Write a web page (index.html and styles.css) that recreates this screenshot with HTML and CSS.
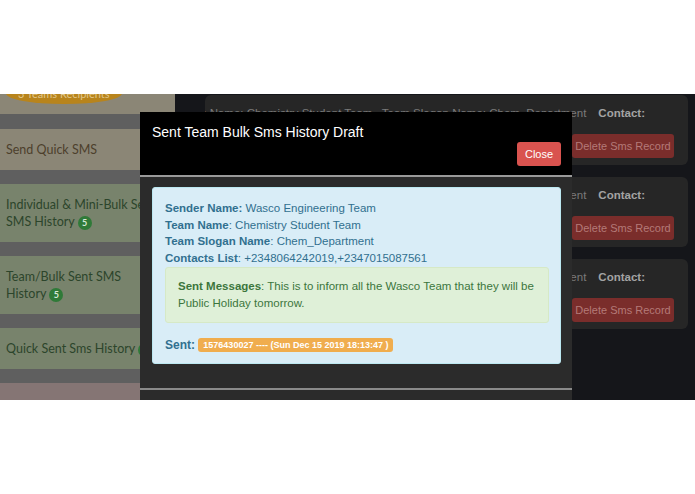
FILE: index.html
```html
<!DOCTYPE html>
<html lang="en">
<head>
    <meta charset="UTF-8">
    <meta name="viewport" content="width=device-width, initial-scale=1.0">
    <title>Sent Team Bulk Sms History</title>
    <link rel="stylesheet" href="styles.css">
</head>
<body>
    <div class="top-space"></div>
    <div class="app">
        <div class="sidebar">
            <div class="side-item beige first">
                <span class="pill">3 Teams Recipients</span>
            </div>
            <div class="side-item beige">Send Quick SMS</div>
            <div class="side-item green">Individual &amp; Mini-Bulk Sent<br>SMS History <span class="count">5</span></div>
            <div class="side-item green">Team/Bulk Sent SMS<br>History <span class="count">5</span></div>
            <div class="side-item green">Quick Sent Sms History <span class="count">3</span></div>
            <div class="side-item pink last">Update Sender Id <span class="count red">1</span></div>
        </div>

        <div class="main">
            <div class="card">
                <div class="card-row"><span>Team Name: Chemistry Student Team &nbsp; Team Slogan Name: Chem_Department</span><b>Contact:</b></div>
                <div class="card-actions"><button class="btn-delete">Delete Sms Record</button></div>
            </div>
            <div class="card">
                <div class="card-row"><span>Team Name: Chemistry Student Team &nbsp; Team Slogan Name: Chem_Department</span><b>Contact:</b></div>
                <div class="card-actions"><button class="btn-delete">Delete Sms Record</button></div>
            </div>
            <div class="card">
                <div class="card-row"><span>Team Name: Chemistry Student Team &nbsp; Team Slogan Name: Chem_Department</span><b>Contact:</b></div>
                <div class="card-actions"><button class="btn-delete">Delete Sms Record</button></div>
            </div>
        </div>

        <!-- modal -->
        <div class="modal">
            <div class="modal-header">
                <h4 class="modal-title">Sent Team Bulk Sms History Draft</h4>
                <button class="btn-close">Close</button>
            </div>
            <div class="modal-body">
                <div class="alert-info">
                    <div><b>Sender Name:</b> Wasco Engineering Team</div>
                    <div><b>Team Name</b>: Chemistry Student Team</div>
                    <div><b>Team Slogan Name</b>: Chem_Department</div>
                    <div><b>Contacts List</b>: +2348064242019,+2347015087561</div>
                    <div class="alert-success">
                        <b>Sent Messages</b>: This is to inform all the Wasco Team that they will be Public Holiday tomorrow.
                    </div>
                    <div class="sent-line"><b>Sent:</b> <span class="label-warning">1576430027 ---- (Sun Dec 15 2019 18:13:47 )</span></div>
                </div>
            </div>
            <div class="modal-footer"></div>
        </div>
    </div>
</body>
</html>
```

FILE: styles.css
```css
body {
    margin: 0;
    background-color: #fff;
    font-family: "Liberation Sans", Arial, sans-serif;
}

.top-space {
    height: 94px;
}

.app {
    position: relative;
    display: flex;
    height: 306px;
    overflow: hidden;
    background-color: #15161a;
}

.sidebar {
    width: 175px;
    flex-shrink: 0;
    background-color: #5f5f5f;
    font-family: Lato, "DejaVu Sans", sans-serif;
    font-size: 12.5px;
    line-height: 17px;
}

.side-item {
    padding: 12px 6px;
    margin-bottom: 14px;
    white-space: nowrap;
}

.side-item.first {
    margin-top: -17px;
    padding: 6px 6px 10px;
    margin-bottom: 15px;
}

.side-item.last {
    padding-top: 15px;
}

.beige {
    background-color: #8b8676;
    color: #4d402c;
}

.green {
    background-color: #78836c;
    color: #2c452b;
}

.pink {
    background-color: #857574;
    color: #3f2d2c;
}

.pill {
    display: inline-block;
    background-color: #b8841c;
    color: #e0c68a;
    border-radius: 50%;
    padding: 2px 12px;
    font-size: 11px;
}

.count {
    display: inline-block;
    width: 14px;
    height: 14px;
    line-height: 14px;
    border-radius: 50%;
    background-color: #2f7a38;
    color: #d8e8d8;
    font-size: 9px;
    font-weight: bold;
    text-align: center;
    vertical-align: middle;
}

.count.red {
    background-color: #8b1d1d;
}

.main {
    flex: 1;
    min-width: 0;
    padding: 1px 7px 0 30px;
}

.card {
    background-color: #262626;
    border-radius: 6px;
    height: 70px;
    margin-bottom: 12px;
    box-sizing: border-box;
    padding-top: 12px;
    overflow: hidden;
}

.card-row {
    display: flex;
    justify-content: flex-end;
    gap: 12px;
    font-size: 11.5px;
    color: #7a7a7a;
    padding-right: 43px;
    white-space: nowrap;
}

.card-row b {
    color: #a3a3a3;
}

.card-actions {
    display: flex;
    justify-content: flex-end;
    padding-right: 14px;
    margin-top: 15px;
}

.btn-delete {
    background-color: #7a2d2b;
    color: #b47a78;
    border: none;
    border-radius: 3px;
    font-family: "Liberation Sans", Arial, sans-serif;
    font-size: 11px;
    height: 24px;
    width: 102px;
    padding: 0;
}

.modal {
    position: absolute;
    left: 140px;
    top: 18px;
    width: 432px;
    background-color: #2b2b2b;
}

.modal-header {
    background-color: #000;
    height: 65px;
    box-sizing: border-box;
    padding: 12px 11px 0 12px;
    border-bottom: 2px solid #9a9a9a;
    position: relative;
}

.modal-title {
    margin: 0;
    color: #fff;
    font-size: 14px;
    font-weight: normal;
}

.btn-close {
    position: absolute;
    right: 11px;
    top: 30px;
    width: 44px;
    height: 24px;
    border: none;
    border-radius: 3px;
    background-color: #d9534f;
    color: #fff;
    font-family: "Liberation Sans", Arial, sans-serif;
    font-size: 11px;
    padding: 0;
}

.modal-body {
    padding: 10px 11px 24px 12px;
    border-bottom: 2px solid #8a8a8a;
}

.alert-info {
    background-color: #d9edf7;
    border: 1px solid #bce8f1;
    border-radius: 3px;
    color: #31708f;
    font-size: 11.5px;
    line-height: 16.5px;
    padding: 12px 11px 9px 12px;
}

.alert-success {
    background-color: #dff0d8;
    border: 1px solid #d6e9c6;
    border-radius: 3px;
    color: #3c763d;
    margin-top: 1px;
    padding: 10px 12px 11px 12px;
}

.sent-line {
    margin-top: 14px;
    font-size: 12px;
}

.label-warning {
    display: inline-block;
    background-color: #f0ad4e;
    color: #fff;
    font-size: 9px;
    font-weight: bold;
    line-height: 14px;
    padding: 0 5px;
    border-radius: 3px;
    vertical-align: 1px;
}

.modal-footer {
    height: 40px;
}
```
